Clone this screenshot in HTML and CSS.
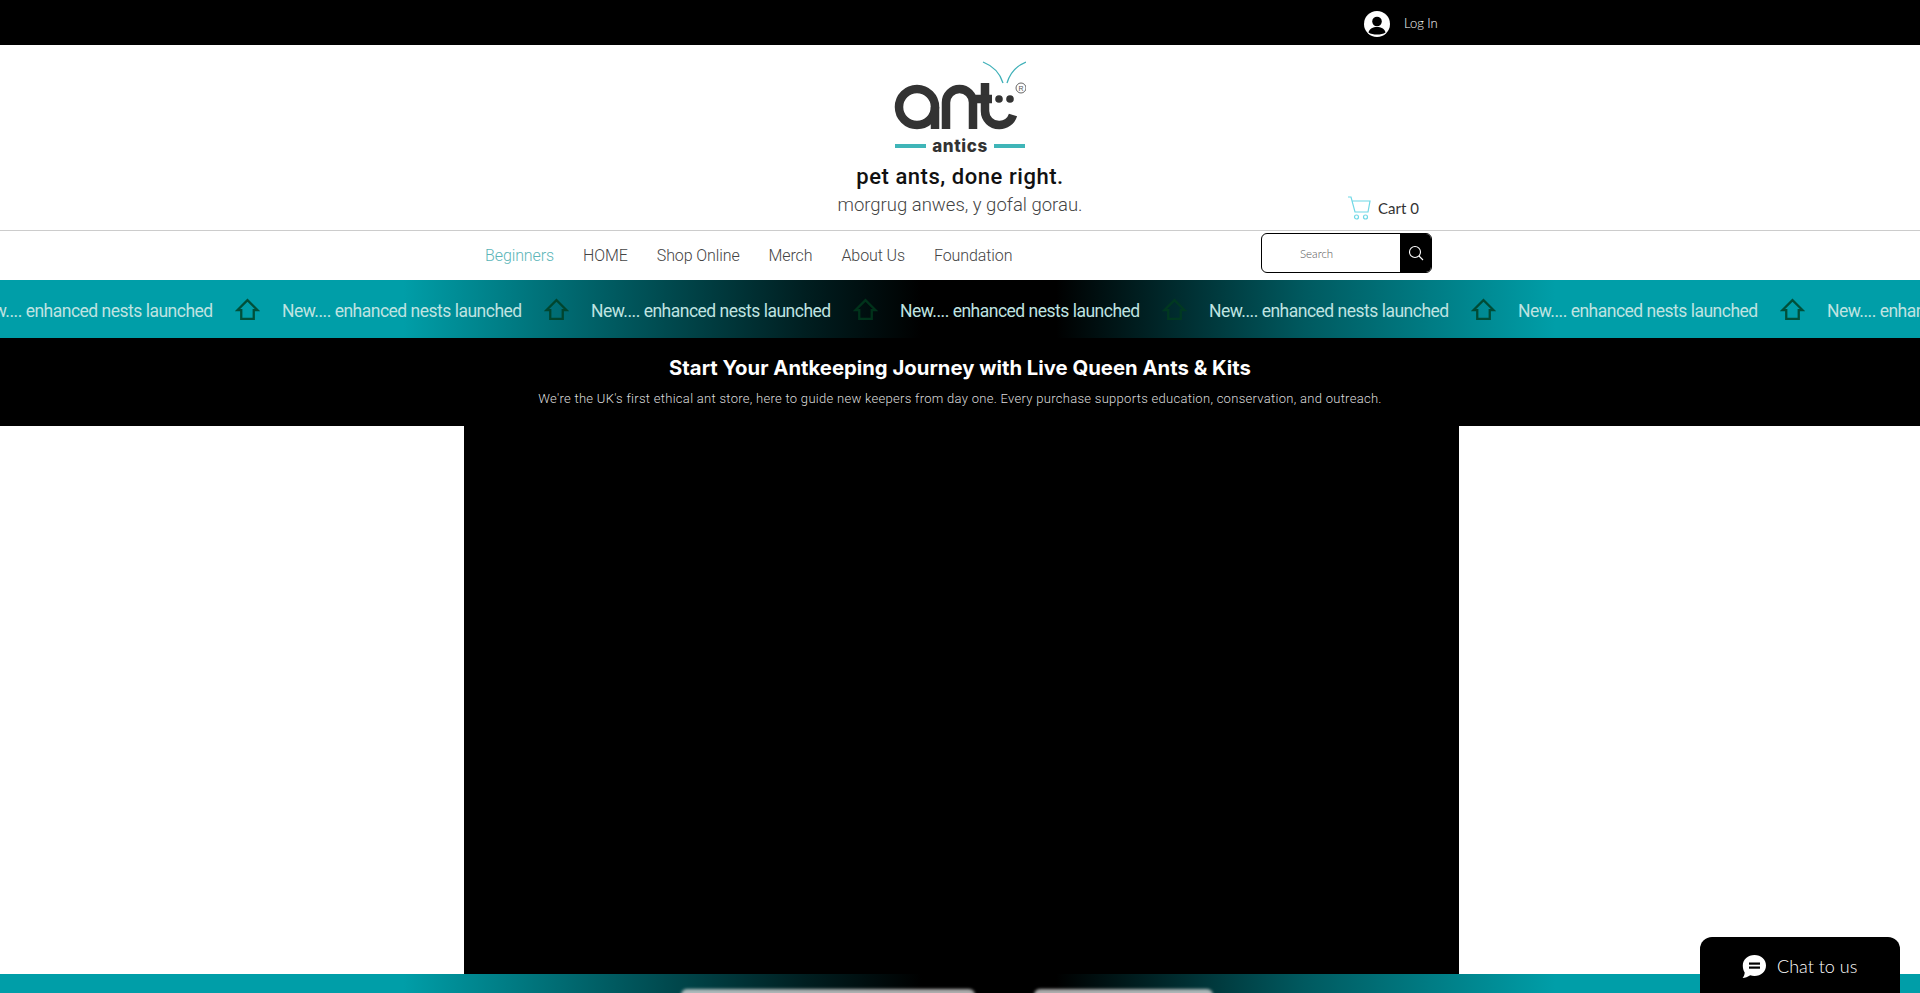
FILE: index.html
```html
<!DOCTYPE html>
<html>
  <head>
    <meta http-equiv="Content-Type" content="text/html;charset=utf-8" />
    <title>Ant Antics</title>
    <link rel="stylesheet" href="styles.css">
  </head>
  <body>
    <div class="topbar">
      <svg class="avatar" viewBox="0 0 26 26">
        <circle cx="13" cy="13" r="13" fill="#fff" />
        <circle cx="13" cy="10.500" r="4.800" fill="#000" />
        <path d="M4.500 21.500c1-4 4.500-5.500 8.500-5.500s7.500 1.500 8.500 5.500c-4 2.700-13 2.700-17 0z" fill="#000" />
      </svg>
      <span class="login">Log In</span>
    </div>

    <div class="brand">
      <div></div>
      <div class="brand-mid">
        <div class="logo">
          <svg class="logo-mark" viewBox="0 0 132 70">
            <path d="M109 23C106 13 99 6 89 2" fill="none" stroke="#3fb0b8" stroke-width="1.300" />
            <path d="M113 23C116 13 122 6 132 2" fill="none" stroke="#3fb0b8" stroke-width="1.300" />
            <g fill="none" stroke="#333" stroke-width="8.500">
              <circle cx="23" cy="47" r="18" />
              <path d="M41 47V69" />
              <path d="M52 69V42.500a13.500 13.500 0 0 1 27 0V69" />
              <path d="M91 23V51a14 14 0 0 0 14 14a14 14 0 0 0 14-10" />
              <path d="M79 39H98" />
            </g>
            <circle cx="105" cy="39" r="3.800" fill="#333" />
            <circle cx="116" cy="39" r="3.800" fill="#333" />
            <circle cx="127" cy="28" r="5" fill="none" stroke="#555" stroke-width="0.900" />
            <text class="logo-reg" x="127" y="30.500">R</text>
          </svg>
          <div class="logo-sub"><i></i><b>antics</b><i></i></div>
        </div>
        <div class="tag-en">pet ants, done right.</div>
        <div class="tag-cy">morgrug anwes, y gofal gorau.</div>
      </div>
      <div class="cart">
        <svg class="cart-icon" viewBox="0 0 24 24">
          <path d="M1 1h3l4 15h13l2-11H5" fill="none" stroke="#6fd8e6" stroke-width="1.200" />
          <circle cx="9.500" cy="21" r="2" fill="none" stroke="#6fd8e6" stroke-width="1.200" />
          <circle cx="18.500" cy="21" r="2" fill="none" stroke="#6fd8e6" stroke-width="1.200" />
        </svg>
        <span>Cart 0</span>
      </div>
    </div>

    <div class="navrow">
      <a class="active">Beginners</a>
      <a>HOME</a>
      <a>Shop Online</a>
      <a>Merch</a>
      <a>About Us</a>
      <a>Foundation</a>
      <div class="search">
        <span class="search-text">Search</span>
        <div class="search-btn">
          <svg viewBox="0 0 16 16" width="16" height="16">
            <circle cx="7" cy="7" r="5.500" fill="none" stroke="#fff" stroke-width="1.100" />
            <path d="M11 11l4 4" stroke="#fff" stroke-width="1.100" />
          </svg>
        </div>
      </div>
    </div>

    <div class="ticker">
      <div class="tick"><span>New.... enhanced nests launched</span><svg viewBox="0 0 24 22"><path d="M12 2L2.500 11.500H6V20H18V11.500H21.500z" /></svg></div>
      <div class="tick"><span>New.... enhanced nests launched</span><svg viewBox="0 0 24 22"><path d="M12 2L2.500 11.500H6V20H18V11.500H21.500z" /></svg></div>
      <div class="tick"><span>New.... enhanced nests launched</span><svg viewBox="0 0 24 22"><path d="M12 2L2.500 11.500H6V20H18V11.500H21.500z" /></svg></div>
      <div class="tick"><span>New.... enhanced nests launched</span><svg viewBox="0 0 24 22"><path d="M12 2L2.500 11.500H6V20H18V11.500H21.500z" /></svg></div>
      <div class="tick"><span>New.... enhanced nests launched</span><svg viewBox="0 0 24 22"><path d="M12 2L2.500 11.500H6V20H18V11.500H21.500z" /></svg></div>
      <div class="tick"><span>New.... enhanced nests launched</span><svg viewBox="0 0 24 22"><path d="M12 2L2.500 11.500H6V20H18V11.500H21.500z" /></svg></div>
      <div class="tick"><span>New.... enhanced nests launched</span><svg viewBox="0 0 24 22"><path d="M12 2L2.500 11.500H6V20H18V11.500H21.500z" /></svg></div>
    </div>

    <div class="intro">
      <h2>Start Your Antkeeping Journey with Live Queen Ants &amp; Kits</h2>
      <p>We're the UK's first ethical ant store, here to guide new keepers from day one. Every purchase supports education, conservation, and outreach.</p>
    </div>

    <div class="videorow">
      <div class="video"></div>
    </div>

    <div class="bottomband">
      <div class="pill pill-a"></div>
      <div class="pill pill-b"></div>
    </div>

    <div class="chat">
      <svg viewBox="0 0 24 24" width="24" height="24">
        <path d="M12.500 1C19 1 24 5.500 24 11.500S19 22 12.500 22c-1.500 0-3-.3-4.300-.8C6 22.800 3 23.700.6 24c1.300-1.600 2-3.600 2.100-5.600C1.400 16.500.8 14.100.8 11.500.8 5.500 6 1 12.500 1z" fill="#fff" />
        <rect x="7" y="8.500" width="11" height="2.200" fill="#000" />
        <rect x="7" y="12.500" width="11" height="2.200" fill="#000" />
      </svg>
      <span>Chat to us</span>
    </div>
  </body>
</html>
```

FILE: styles.css
```css
html, body {
  margin: 0;
  padding: 0;
  background: #fff;
}

body {
  height: 993px;
  overflow: hidden;
  position: relative;
  font-family: "Roboto", sans-serif;
}

/* top black strip */
.topbar {
  height: 45px;
  background: #000;
  display: flex;
  align-items: center;
  justify-content: flex-end;
  padding-right: 484px;
}

.avatar {
  width: 26px;
  height: 26px;
  margin-right: 14px;
  margin-top: 3px;
}

.login {
  font-family: "Lato", sans-serif;
  font-weight: 300;
  font-size: 13px;
  color: #fff;
  width: 32px;
  margin-top: 1px;
  white-space: nowrap;
}

/* logo + tagline */
.brand {
  height: 185px;
  display: grid;
  grid-template-columns: 1fr 260px 1fr;
}

.brand-mid {
  display: flex;
  flex-direction: column;
  align-items: center;
}

.logo {
  width: 132px;
  padding-top: 15px;
}

.logo-mark {
  display: block;
  width: 132px;
  height: 70px;
}

.logo-reg {
  font-family: "Liberation Sans", sans-serif;
  font-size: 7px;
  text-anchor: middle;
  fill: #555;
}

.logo-sub {
  display: flex;
  align-items: center;
  justify-content: center;
  margin-top: 5px;
  height: 22px;
}

.logo-sub i {
  display: block;
  width: 31px;
  height: 4px;
  background: #3fb5b8;
}

.logo-sub b {
  font-family: "Inter", sans-serif;
  font-weight: 800;
  font-size: 17px;
  letter-spacing: 0.6px;
  color: #333;
  margin: 0 6px;
}

.tag-en {
  margin-top: 5px;
  font-size: 22px;
  font-weight: 500;
  letter-spacing: 0.55px;
  line-height: 30px;
  color: #111;
  white-space: nowrap;
}

.tag-cy {
  font-size: 18.500px;
  font-weight: 300;
  line-height: 26px;
  color: #444;
  white-space: nowrap;
}

.cart {
  display: flex;
  align-items: center;
  align-self: end;
  padding-left: 257px;
  padding-bottom: 10px;
  font-family: "Lato", sans-serif;
  font-size: 15px;
  color: #333;
}

.cart-icon {
  width: 24px;
  height: 24px;
  margin-right: 7px;
}

/* nav */
.navrow {
  height: 49px;
  border-top: 1px solid #ccc;
  display: flex;
  align-items: center;
  padding-left: 485px;
  padding-right: 488px;
}

.navrow a {
  font-size: 16px;
  font-weight: 300;
  letter-spacing: -0.1px;
  color: #444;
  margin-right: 29px;
  white-space: nowrap;
}

.navrow a.active {
  color: #5bb5b8;
}

.search {
  margin-left: auto;
  width: 171px;
  height: 40px;
  box-sizing: border-box;
  border: 1px solid #000;
  border-radius: 6px;
  display: flex;
  align-items: center;
  overflow: hidden;
  margin-top: -5px;
}

.search-text {
  font-family: "Lato", sans-serif;
  font-weight: 300;
  font-size: 11.500px;
  color: #555;
  margin-left: 38px;
}

.search-btn {
  margin-left: auto;
  width: 31px;
  height: 100%;
  background: #000;
  display: flex;
  align-items: center;
  justify-content: center;
}

/* scrolling strip */
.ticker {
  height: 58px;
  display: flex;
  align-items: center;
  overflow: hidden;
  background: linear-gradient(to right, #009ea8 21%, #005a60 32%, #001e20 42%, #000 48%, #000 55%, #005a60 68%, #009ea8 81%);
}

.tick {
  flex: none;
  width: 309px;
  display: flex;
  align-items: center;
  position: relative;
  left: -27px;
}

.tick span {
  width: 240px;
  margin-right: 22px;
  margin-top: 4px;
  font-size: 17.500px;
  letter-spacing: -0.5px;
  color: #bfe3e1;
  white-space: nowrap;
}

.tick svg {
  width: 25px;
  height: 23px;
  fill: none;
  stroke: rgba(0, 60, 30, 0.8);
  stroke-width: 2.200;
}

/* black intro */
.intro {
  height: 88px;
  background: #000;
  text-align: center;
  color: #fff;
  overflow: hidden;
}

.intro h2 {
  margin: 0;
  padding-top: 16px;
  font-family: "Inter", sans-serif;
  font-weight: 700;
  font-size: 20.300px;
  line-height: 28px;
}

.intro p {
  margin: 8px 0 0;
  font-size: 13px;
  font-weight: 300;
  letter-spacing: 0.29px;
  line-height: 18px;
  color: #ddd;
}

.videorow {
  height: 548px;
  display: flex;
  justify-content: center;
}

.video {
  width: 995px;
  height: 100%;
  background: #000;
  margin-left: 3px;
}

.bottomband {
  height: 19px;
  display: flex;
  overflow: hidden;
  background: linear-gradient(to right, #009ea8 21%, #005a60 32%, #001e20 42%, #000 48%, #000 55%, #005a60 68%, #009ea8 81%);
}

.pill {
  height: 30px;
  margin-top: 15px;
  border-radius: 6px;
  background: #d8d8d8;
  filter: blur(1.500px);
  opacity: 0.8;
}

.pill-a {
  width: 294px;
  margin-left: 681px;
}

.pill-b {
  width: 179px;
  margin-left: 59px;
}

/* chat widget sits over the page */
.chat {
  position: absolute;
  right: 20px;
  bottom: 0;
  width: 200px;
  height: 56px;
  background: #000;
  border-radius: 12px 12px 0 0;
  display: flex;
  align-items: center;
  box-sizing: border-box;
  padding-left: 42px;
  padding-top: 2px;
  color: #fff;
  font-family: "Lato", sans-serif;
  font-weight: 300;
  font-size: 18px;
}

.chat span {
  margin-left: 11px;
}
```
